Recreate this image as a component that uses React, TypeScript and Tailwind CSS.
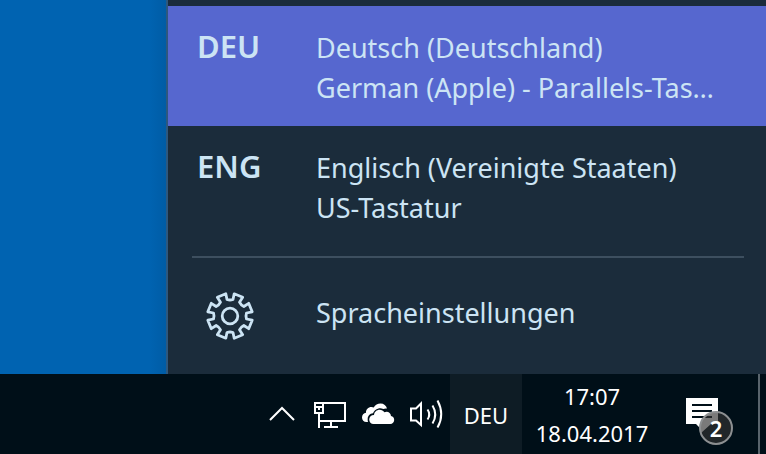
import type { ReactNode } from 'react';

type Layout = { code: string; language: string; keyboard: string; active?: boolean };

const layouts: Layout[] = [
  { code: 'DEU', language: 'Deutsch (Deutschland)', keyboard: 'German (Apple) - Parallels-Tas…', active: true },
  { code: 'ENG', language: 'Englisch (Vereinigte Staaten)', keyboard: 'US-Tastatur' },
];

function LayoutRow({ code, language, keyboard, active }: Layout) {
  return (
    <button
      type="button"
      aria-pressed={!!active}
      className={`flex w-full items-start pt-[22px] pr-6 pb-[18px] pl-[29px] text-left ${active ? 'bg-[#5667cf]' : ''}`}
    >
      <span className="w-[119px] shrink-0 text-[31px] leading-9 font-semibold">{code}</span>
      <span className="flex min-w-0 flex-1 flex-col text-[27px] leading-10">
        <span className="truncate">{language}</span>
        <span className="truncate">{keyboard}</span>
      </span>
    </button>
  );
}

function GearIcon() {
  return (
    <svg viewBox="-25 -25 50 50" className="size-[50px]" fill="none" stroke="currentColor" strokeWidth="2.8" strokeLinejoin="round" aria-hidden="true">
      <path d="M-3-16.5Q0-15.5 3-16.5L4.2-22.2 12.7-18.7 9.5-13.8Q10.9-10.9 13.8-9.5L18.7-12.7 22.2-4.2 16.5-3Q15.5 0 16.5 3L22.2 4.2 18.7 12.7 13.8 9.5Q10.9 10.9 9.5 13.8L12.7 18.7 4.2 22.2 3 16.5Q0 15.5-3 16.5L-4.2 22.2-12.7 18.7-9.5 13.8Q-10.9 10.9-13.8 9.5L-18.7 12.7-22.2 4.2-16.5 3Q-15.5 0-16.5-3L-22.2-4.2-18.7-12.7-13.8-9.5Q-10.9-10.9-9.5-13.8L-12.7-18.7-4.2-22.2Z" />
      <circle r="7.8" />
    </svg>
  );
}

function TrayButton({ label, children }: { label: string; children: ReactNode }) {
  return (
    <button type="button" aria-label={label} className="flex w-12 items-center justify-center">
      <svg viewBox="0 0 48 48" className="size-12" fill="none" stroke="currentColor" strokeWidth="2" aria-hidden="true">
        {children}
      </svg>
    </button>
  );
}

export default function App() {
  return (
    <div className="flex min-h-screen flex-col bg-[#0063b1] font-['Noto_Sans','Open_Sans',sans-serif]">
      <main className="flex flex-1">
        <div className="w-[166px] shrink-0 bg-linear-to-r from-[#0063b1] from-90% to-[#005ca5]" />
        <section aria-label="Sprachauswahl" className="flex min-w-0 flex-1 flex-col border-l-2 border-[#2d587f] bg-[#1b2c3b] pt-1.5 text-[#cce4f4]">
          {layouts.map((layout) => (
            <LayoutRow key={layout.code} {...layout} />
          ))}
          <hr className="mt-2.5 mr-[22px] ml-6 border-t-2 border-[#3d4f5f]" />
          <button type="button" className="flex w-full flex-1 items-center pl-[37px] text-left">
            <span className="w-[111px] shrink-0"><GearIcon /></span>
            <span className="pb-1.5 text-[27px] leading-10">Spracheinstellungen</span>
          </button>
        </section>
      </main>
      <footer className="flex h-20 shrink-0 justify-end bg-[#000f18] text-white">
        <TrayButton label="Ausgeblendete Symbole einblenden">
          <path d="M12 30 24 18 36 30" />
        </TrayButton>
        <TrayButton label="Netzwerk">
          <path d="M17 13H39V31H14M9 13H17V23H9ZM9 17H17M13 23V38M25 31V37M18 37H32" />
          <path d="M12 18h2v2h-2z" fill="currentColor" stroke="none" />
        </TrayButton>
        <TrayButton label="OneDrive">
          <path stroke="none" fill="currentColor" d="M14 32H12.5C9.8 32 8 30 8 27.500C8 25 9.700 23.200 12 22.800C11.800 19.500 14.200 17 17.500 17C18.300 17 19 17.200 19.700 17.500C21.200 15 23.700 13.500 26.500 13.500C29.800 13.500 32.300 15.500 33 18.500C31.500 18.300 30.300 18.500 29.300 19C27.800 18.200 26 18 24.500 18.400C21.800 19 19.800 20.800 19 23.300C16 23.600 13.800 25.800 13.700 28.700C13.600 30 13.700 31 14 32Z" />
          <path stroke="none" fill="currentColor" d="M19.500 34C17 34 15.200 32 15.200 29.500C15.200 26.900 17.200 25 20 25C20.300 21.800 22.700 19.700 25.700 19.700C27.700 19.700 29.300 20.600 30.400 22.200C33.500 20.700 36.800 22.600 37 26C39 26.200 40.200 28 40.200 30C40.200 32.300 38.500 34 36.300 34Z" />
        </TrayButton>
        <TrayButton label="Lautsprecher">
          <path d="M9 18.500H14L19 13.500V35L14 30.500H9Z" />
          <path d="M25.500 19.500Q29 24.500 25.500 29.500M30.500 15.500Q36 24.500 30.500 33.500M35.500 10.500Q43 24.500 35.500 37.500" />
        </TrayButton>
        <button type="button" className="w-[72px] bg-[#0e1c25] pt-0.5 text-[22px] leading-9">DEU</button>
        <time dateTime="2017-04-18T17:07" className="flex w-[140px] flex-col items-center pt-1 text-[22px] leading-[37px]">
          <span>17:07</span>
          <span>18.04.2017</span>
        </time>
        <button type="button" aria-label="2 neue Benachrichtigungen" className="flex w-24 items-center justify-center">
          <span className="relative block size-12">
            <svg viewBox="0 0 48 48" className="size-12" aria-hidden="true">
              <path fill="#fff" d="M0 8H32V34H25L15 43V39L10 34H0Z" />
              <path stroke="#000f18" strokeWidth="2" d="M6 15H26M6 21H26M6 27H26" />
            </svg>
            <span className="absolute top-[21px] right-px flex size-[34px] items-center justify-center rounded-full border-2 border-[#8c8f91] bg-[#333333]/65 text-[22px] leading-none font-semibold">2</span>
          </span>
        </button>
        <button type="button" aria-label="Desktop anzeigen" className="w-2 border-l-2 border-[#59646c]" />
      </footer>
    </div>
  );
}
